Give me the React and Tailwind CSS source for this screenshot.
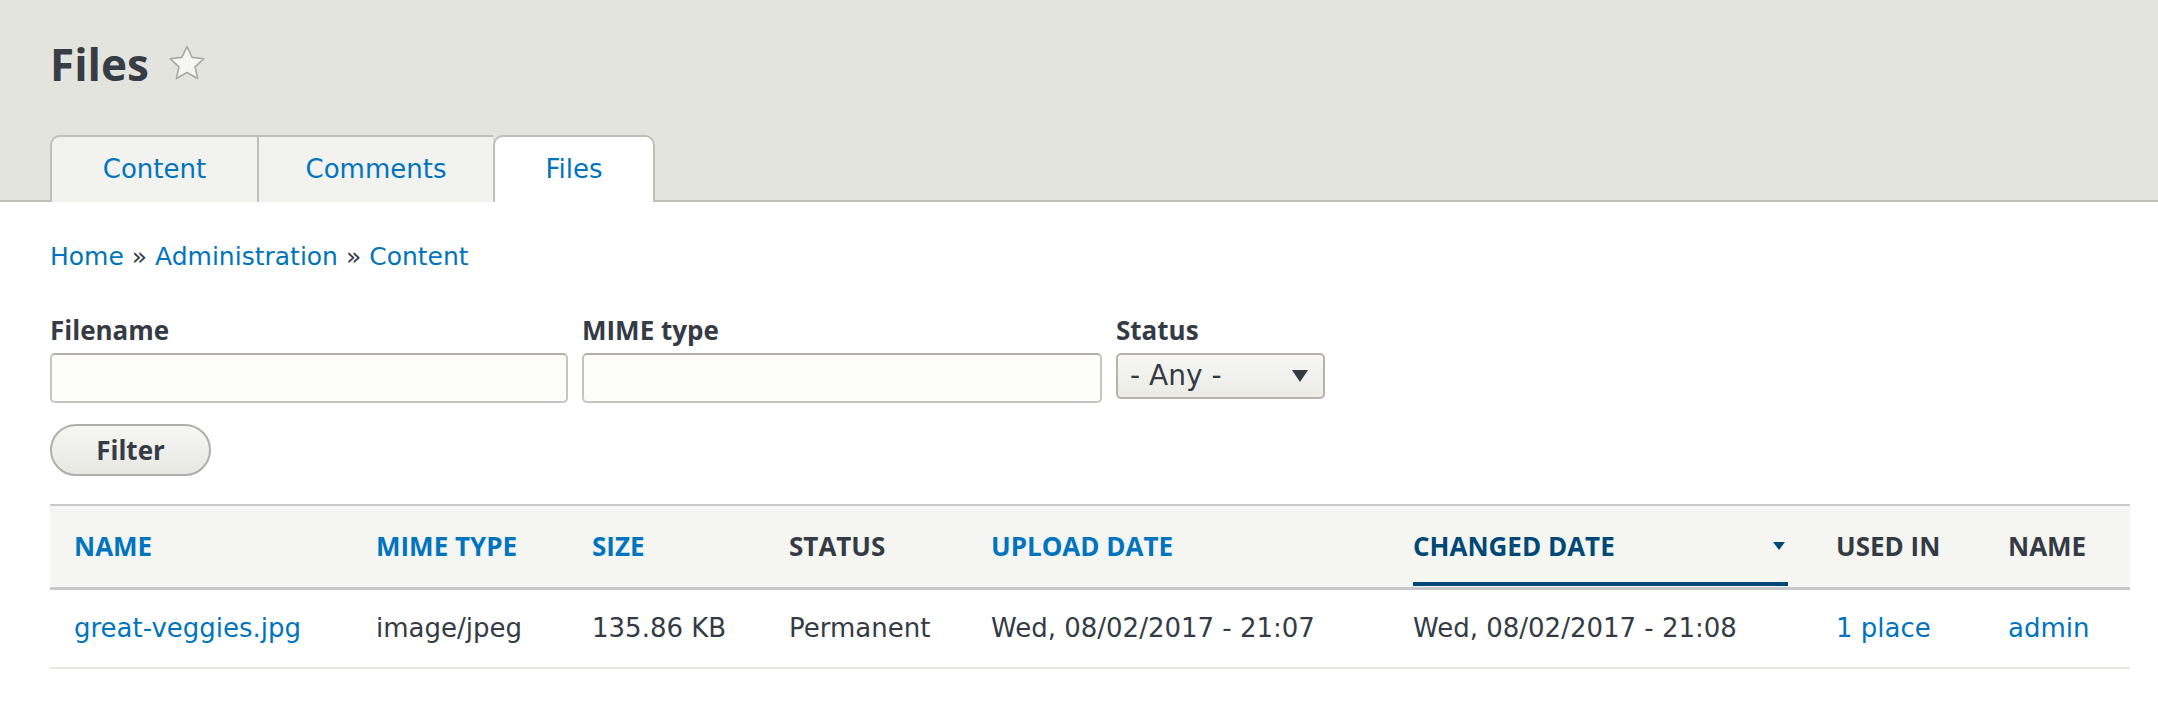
import { useState } from 'react'

const columns = [
  { label: 'Name', link: true, w: 'w-[302px]' },
  { label: 'MIME type', link: true, w: 'w-[216px]' },
  { label: 'Size', link: true, w: 'w-[197px]' },
  { label: 'Status', link: false, w: 'w-[202px]' },
  { label: 'Upload date', link: true, w: 'w-[422px]' },
  { label: 'Changed date', link: true, active: true, w: 'w-[423px]' },
  { label: 'Used in', link: false, w: 'w-[172px]' },
  { label: 'Name', link: false, w: 'w-[146px]' },
]

const rows = [
  {
    name: 'great-veggies.jpg',
    mime: 'image/jpeg',
    size: '135.86 KB',
    status: 'Permanent',
    uploaded: 'Wed, 08/02/2017 - 21:07',
    changed: 'Wed, 08/02/2017 - 21:08',
    usedIn: '1 place',
    owner: 'admin',
  },
]

function Star() {
  return (
    <svg width="40" height="38" viewBox="0 0 24 23" className="ml-[18px] mt-[10px]">
      <path
        d="M12 1.5l3.1 6.6 7.1.8-5.3 4.9 1.5 7.1L12 17.3 5.6 20.9l1.5-7.1L1.8 8.9l7.1-.8z"
        fill="#f6f6f3"
        stroke="#a9a9a6"
        strokeWidth="1"
        strokeLinejoin="round"
      />
    </svg>
  )
}

export default function App() {
  const [filename, setFilename] = useState('')
  const [mime, setMime] = useState('')
  const tabs = ['Content', 'Comments', 'Files']

  return (
    <div className="min-h-screen bg-white font-['DejaVu_Sans','Open_Sans',sans-serif] text-[26px] text-[#343b45]">
      {/* Header */}
      <header className="bg-[#e4e4de] border-b-2 border-[#bfbfba] pl-[50px]">
        <div className="flex items-start pt-[34px] h-[135px]">
          <h1 className="font-['Open_Sans',sans-serif] text-[44px] leading-[60px] font-bold text-[#373d45]">Files</h1>
          <Star />
        </div>
        <nav className="flex -mb-[2px]">
          {tabs.map((tab, i) => {
            const active = tab === 'Files'
            return (
              <a
                key={tab}
                href="#"
                className={`h-[67px] flex items-center justify-center text-[#0074bd] border-[#bfbfba] border-t-2 ${
                  active
                    ? 'bg-white border-x-2 rounded-t-[10px] w-[162px]'
                    : i === 0
                      ? 'bg-[#f2f2ef] border-l-2 rounded-tl-[10px] w-[207px]'
                      : 'bg-[#f2f2ef] border-l-2 w-[236px]'
                }`}
              >
                {tab}
              </a>
            )
          })}
        </nav>
      </header>

      <main className="pl-[50px] pr-[28px]">
        {/* Breadcrumb */}
        <div className="pt-[35px] leading-[40px] text-[25px] text-[#0074bd]">
          <a href="#">Home</a>
          <span className="text-[#343b45]"> » </span>
          <a href="#">Administration</a>
          <span className="text-[#343b45]"> » </span>
          <a href="#">Content</a>
        </div>

        {/* Filters */}
        <div className="flex gap-[14px] mt-[36px] font-['Open_Sans',sans-serif]">
          <div className="flex flex-col">
            <label className="font-bold leading-[34px]">Filename</label>
            <input
              value={filename}
              onChange={(e) => setFilename(e.target.value)}
              className="mt-[6px] w-[518px] h-[50px] rounded-[5px] border-2 border-[#c4c4c0] border-t-[#b3afab] bg-[#fcfcfa]"
            />
          </div>
          <div className="flex flex-col">
            <label className="font-bold leading-[34px]">MIME type</label>
            <input
              value={mime}
              onChange={(e) => setMime(e.target.value)}
              className="mt-[6px] w-[520px] h-[50px] rounded-[5px] border-2 border-[#c4c4c0] border-t-[#b3afab] bg-[#fcfcfa]"
            />
          </div>
          <div className="flex flex-col">
            <label className="font-bold leading-[34px]">Status</label>
            <div className="mt-[6px] w-[209px] h-[46px] rounded-[5px] border-2 border-[#b5b2ae] bg-gradient-to-b from-[#f7f7f4] to-[#ebebe6] flex items-center justify-between pl-[12px] pr-[14px]">
              <span className="font-['DejaVu_Sans',sans-serif] text-[28px] text-[#343b45]">- Any -</span>
              <svg width="18" height="14" viewBox="0 0 18 14">
                <path d="M1 1h16L9 13z" fill="#343b45" />
              </svg>
            </div>
          </div>
        </div>

        <button className="mt-[21px] w-[161px] h-[52px] rounded-full border-2 border-[#b0aeab] bg-gradient-to-b from-[#f6f6f3] to-[#e8e8e3] font-['Open_Sans',sans-serif] font-bold text-[#343b45]">
          Filter
        </button>

        {/* Table */}
        <table className="mt-[28px] w-[2080px] table-fixed border-collapse">
          <thead>
            <tr className="bg-[#f5f5f2] border-t-2 border-b-[3px] border-[#c6c8c9] h-[83px]">
              {columns.map((col, i) => (
                <th key={i} className={`${col.w} text-left font-['Open_Sans',sans-serif] font-bold uppercase px-[24px] align-middle`}>
                  {col.active ? (
                    <div className="flex items-center justify-between h-[80px] border-b-4 border-[#004875] pt-[4px]">
                      <span className="text-[#004875]">{col.label}</span>
                      <svg width="14" height="10" viewBox="0 0 14 10" className="mr-[2px]">
                        <path d="M1 1h12L7 9z" fill="#004875" />
                      </svg>
                    </div>
                  ) : (
                    <span className={col.link ? 'text-[#0074bd]' : 'text-[#343b45]'}>{col.label}</span>
                  )}
                </th>
              ))}
            </tr>
          </thead>
          <tbody>
            {rows.map((row) => (
              <tr key={row.name} className="border-b-2 border-[#e8e7e2] h-[80px]">
                <td className="px-[24px] text-[#0074bd]">{row.name}</td>
                <td className="px-[24px]">{row.mime}</td>
                <td className="px-[24px]">{row.size}</td>
                <td className="px-[24px]">{row.status}</td>
                <td className="px-[24px]">{row.uploaded}</td>
                <td className="px-[24px]">{row.changed}</td>
                <td className="px-[24px] text-[#0074bd]">{row.usedIn}</td>
                <td className="px-[24px] text-[#0074bd]">{row.owner}</td>
              </tr>
            ))}
          </tbody>
        </table>
      </main>
    </div>
  )
}
